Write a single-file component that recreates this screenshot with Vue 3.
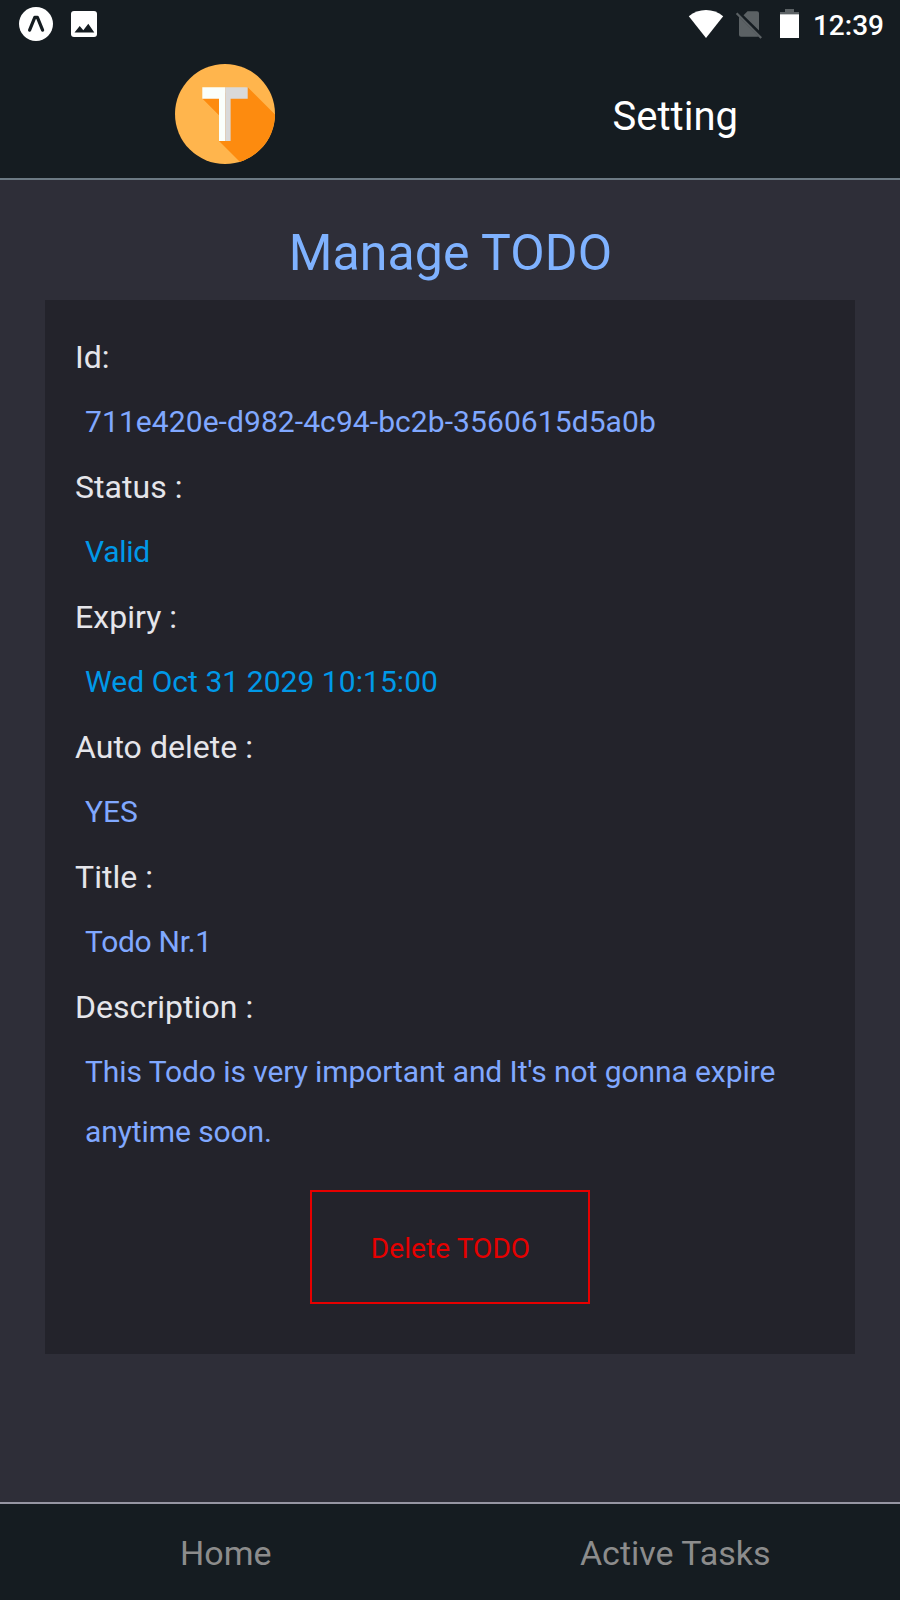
<script setup>
const fields = [
  { label: 'Id:', value: '711e420e-d982-4c94-bc2b-3560615d5a0b', tone: 'ident' },
  { label: 'Status :', value: 'Valid', tone: 'status tight' },
  { label: 'Expiry :', value: 'Wed Oct 31 2029 10:15:00', tone: 'status date' },
  { label: 'Auto delete :', value: 'YES' },
  { label: 'Title :', value: 'Todo Nr.1', tone: 'tight' },
  { label: 'Description :', value: "This Todo is very important and It's not gonna expire anytime soon.", tone: 'prose' },
]
</script>

<template>
  <div class="screen">
    <div class="statusbar">
      <svg class="notifications" width="110" height="48" viewBox="0 0 110 48">
        <circle cx="36" cy="24" r="17" fill="#fff" />
        <path d="M29.6 30.2L34.8 17.4h2.6l5.2 12.8" fill="none" stroke="#151c21" stroke-width="3.2" stroke-linecap="round" stroke-linejoin="round" />
        <rect x="71" y="11" width="26" height="26" rx="3" fill="#fff" />
        <path d="M74.5 32.5l5.2-6.5 3.6 4.3 5-6.5 6 8.7z" fill="#151c21" />
      </svg>
      <div class="system">
        <svg width="124" height="48" viewBox="685 0 124 48">
          <path d="M688.8 16.2C698.5 8 713.5 8 723.2 16.2L706 38z" fill="#fff" />
          <path d="M743.5 15.2L747.5 11.2H757a2 2 0 0 1 2 2v17.2zM739 16.8L758.5 36.3a2 2 0 0 1-1 .4H741a2 2 0 0 1-2-2z" fill="#5b6164" />
          <path d="M736.6 13.2L761.2 38" stroke="#5b6164" stroke-width="2.2" />
          <path d="M780 14.5V12h5V9h9v3h5v2.5z" fill="#5b6164" />
          <rect x="780" y="14.3" width="19" height="23.7" fill="#fff" />
        </svg>
        <span class="clock">12:39</span>
      </div>
    </div>

    <header class="header">
      <div class="cell">
        <svg width="100" height="100" viewBox="0 0 100 100">
          <defs>
            <clipPath id="disc"><circle cx="50" cy="50" r="50" /></clipPath>
          </defs>
          <circle cx="50" cy="50" r="50" fill="#ffb54d" />
          <path d="M72.7 23.3L122.7 73.3V155H122L44 77V51.3L27.3 34.6z" fill="#fd8b0f" clip-path="url(#disc)" />
          <path d="M27.3 23.3H50.2V77H44V34.7H27.3z" fill="#fafffc" />
          <path d="M50.2 23.3H72.7V34.7H55.6V77H50.2z" fill="#d9d9d9" />
        </svg>
      </div>
      <div class="cell setting">Setting</div>
    </header>

    <main class="content">
      <h1>Manage TODO</h1>
      <section class="card">
        <template v-for="field in fields" :key="field.label">
          <div class="label">{{ field.label }}</div>
          <div class="value" :class="field.tone">{{ field.value }}</div>
        </template>
        <button class="delete">Delete TODO</button>
      </section>
    </main>

    <nav class="tabs">
      <div class="cell home">Home</div>
      <div class="cell">Active Tasks</div>
    </nav>
  </div>
</template>

<style>
body {
  margin: 0;
  background: #2e2e38;
}
</style>

<style scoped>
.screen {
  width: 900px;
  height: 1600px;
  display: flex;
  flex-direction: column;
  overflow: hidden;
  background: #2e2e38;
  font-family: Roboto, "Liberation Sans", sans-serif;
}
.statusbar {
  height: 48px;
  flex: none;
  display: flex;
  justify-content: space-between;
  background: #151c21;
}
.system {
  display: flex;
  padding-right: 16px;
}
.clock {
  margin-left: 4px;
  font-size: 28px;
  font-weight: 500;
  line-height: 52px;
  color: #fff;
}
.header {
  height: 130px;
  flex: none;
  display: flex;
  background: #151c21;
  border-bottom: 2px solid #6c7a84;
}
.cell {
  flex: 1;
  display: flex;
  justify-content: center;
}
.header svg {
  margin-top: 16px;
}
.setting {
  padding-left: 1px;
  font-size: 40px;
  line-height: 138px;
  color: #fff;
}
.content {
  flex: 1;
}
h1 {
  margin: 0;
  padding: 40px 0 0 1px;
  height: 80px;
  font-size: 50px;
  font-weight: 400;
  line-height: 66px;
  letter-spacing: 0.1px;
  text-align: center;
  color: #7fb2ff;
}
.card {
  box-sizing: border-box;
  height: 1054px;
  margin: 0 45px;
  padding: 27px 30px 0;
  background: #23232b;
}
.label {
  font-size: 32px;
  line-height: 60px;
  letter-spacing: 0.04px;
  color: #e5e5ea;
}
.value {
  margin: 5px 10px;
  font-size: 30px;
  line-height: 60px;
  color: #80a8ff;
}
.status {
  color: #0099e8;
}
.ident {
  letter-spacing: 0.08px;
}
.date {
  letter-spacing: 0.05px;
}
.tight {
  letter-spacing: -0.3px;
}
.prose {
  letter-spacing: -0.085px;
}
.delete {
  display: block;
  box-sizing: border-box;
  width: 280px;
  height: 114px;
  margin: 28px auto 0;
  padding: 2px 0 0 1px;
  border: 2px solid #e60000;
  background: none;
  font-family: inherit;
  font-size: 28px;
  letter-spacing: 0.08px;
  color: #e60000;
}
.tabs {
  height: 96px;
  flex: none;
  display: flex;
  border-top: 2px solid #9696a3;
  background: #151c21;
  font-size: 34px;
  line-height: 98px;
  color: #8c8c8c;
}
.home {
  padding-left: 1px;
}
</style>
